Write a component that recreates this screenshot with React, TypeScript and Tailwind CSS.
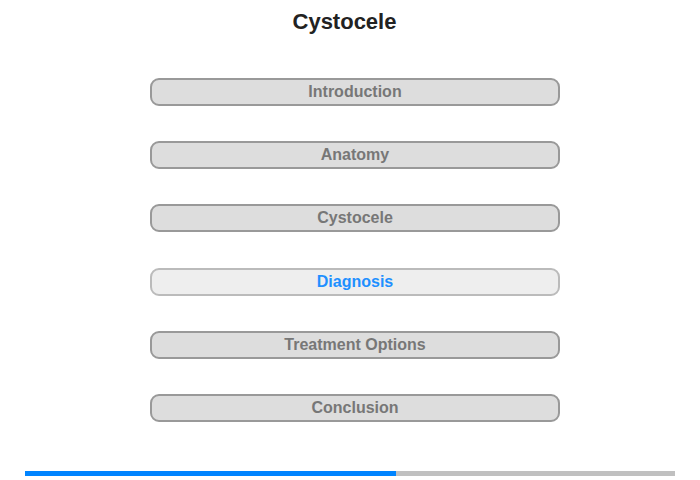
import React from "react";

const items = [
  { label: "Introduction", active: false },
  { label: "Anatomy", active: false },
  { label: "Cystocele", active: false },
  { label: "Diagnosis", active: true },
  { label: "Treatment Options", active: false },
  { label: "Conclusion", active: false },
];

export default function App() {
  return (
    <div
      className="w-[700px] h-[480px] bg-white relative overflow-hidden"
      style={{ fontFamily: '"Liberation Sans", Arial, sans-serif' }}
    >
      <div className="pt-[9px] w-[689px] text-center text-[22px] leading-[26px] font-bold text-[#222]">
        Cystocele
      </div>
      <div className="mt-[43px] ml-[150px] w-[410px] flex flex-col gap-[35.2px]">
        {items.map((it) => (
          <div
            key={it.label}
            className={
              it.active
                ? "h-[28px] rounded-[9px] border-2 border-[#bbbbbb] bg-[#eeeeee] text-[#1e90ff] flex items-center justify-center text-[16px] font-bold"
                : "h-[28px] rounded-[9px] border-2 border-[#999999] bg-[#dddddd] text-[#777777] flex items-center justify-center text-[16px] font-bold"
            }
          >
            {it.label}
          </div>
        ))}
      </div>
      <div className="absolute left-[25px] top-[471px] w-[650px] h-[5px] bg-[#c0c0c0] flex">
        <div className="h-full w-[371px] bg-[#0084ff]" />
      </div>
    </div>
  );
}
